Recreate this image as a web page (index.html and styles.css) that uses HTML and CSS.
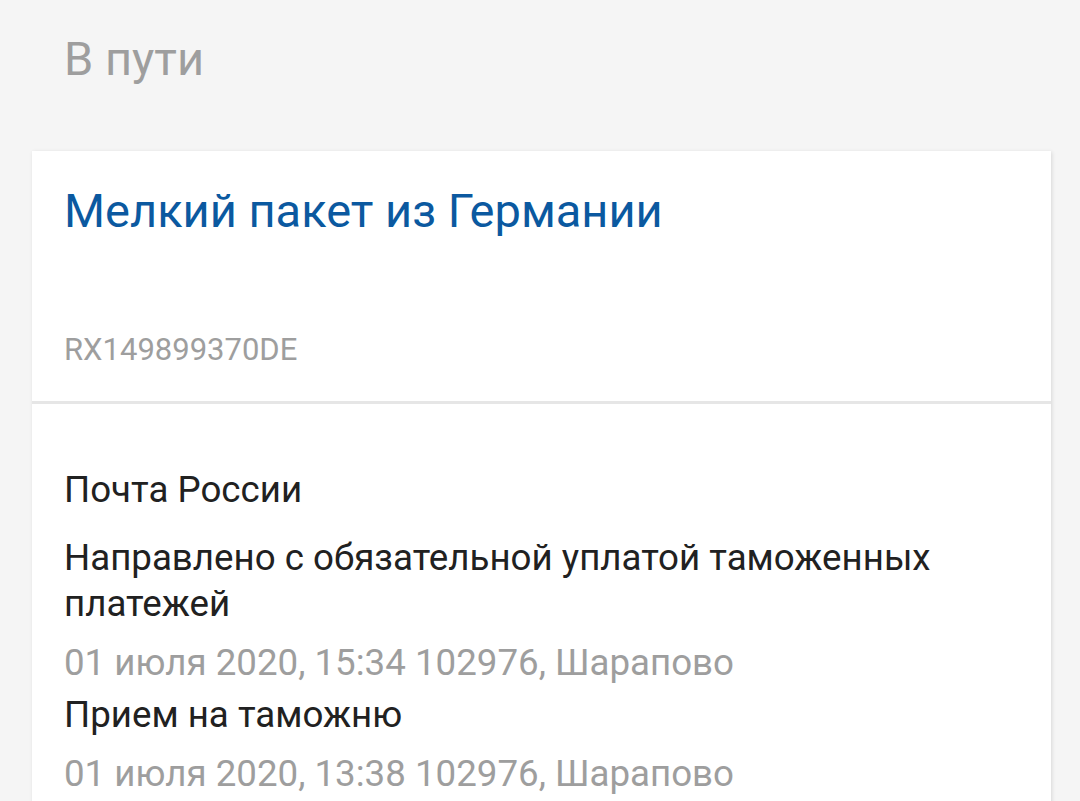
FILE: index.html
```html
<!DOCTYPE html>
<html lang="ru">

<head>
  <meta charset="UTF-8">
  <meta name="viewport" content="width=device-width, initial-scale=1.0">
  <title>В пути</title>
  <link rel="stylesheet" href="styles.css">
</head>

<body>
  <div class="section-title">В пути</div>

  <div class="card">
    <div class="card-head">
      <div class="parcel-name">Мелкий пакет из Германии</div>
      <div class="track-number">RX149899370DE</div>
    </div>
    <div class="card-body">
      <div class="carrier">Почта России</div>
      <div class="event">
        <div class="event-text">Направлено с обязательной уплатой таможенных платежей</div>
        <div class="event-date">01 июля 2020, 15:34 102976, Шарапово</div>
      </div>
      <div class="event">
        <div class="event-text">Прием на таможню</div>
        <div class="event-date">01 июля 2020, 13:38 102976, Шарапово</div>
      </div>
    </div>
  </div>
</body>

</html>
```

FILE: styles.css
```css
html,
body {
  margin: 0;
  height: 100%;
  overflow: hidden;
}

body {
  background-color: #f5f5f5;
  font-family: Roboto, "Noto Sans", sans-serif;
}

div.section-title {
  padding: 29px 0 0 64px;
  font-size: 47px;
  line-height: 60px;
  color: #9e9e9e;
  margin-bottom: 62px;
}

div.card {
  margin: 0 29px 0 32px;
  background-color: #fff;
  box-shadow: 1px 1px 4px rgba(0, 0, 0, 0.12);
}

div.card-head {
  padding: 32px 32px 31px;
  border-bottom: 3px solid #e6e6e6;
}

div.parcel-name {
  font-size: 47px;
  line-height: 56px;
  color: #0b59a0;
}

div.track-number {
  margin-top: 91px;
  font-size: 31px;
  line-height: 40px;
  color: #9e9e9e;
}

div.card-body {
  padding: 63px 32px 40px;
  font-size: 36.7px;
  line-height: 46px;
  color: #212121;
}

div.carrier {
  margin-bottom: 22px;
}

div.event + div.event {
  margin-top: 6px;
}

div.event-date {
  margin-top: 13px;
  color: #9e9e9e;
}
```
